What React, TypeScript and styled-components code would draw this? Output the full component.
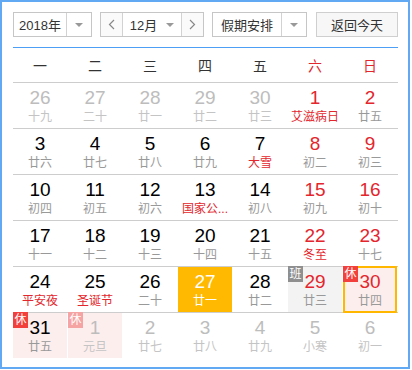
import styled, { createGlobalStyle, css } from "styled-components";

const GlobalStyle = createGlobalStyle`
body {
  margin: 0;
  background: #fff;
  font-family: "Liberation Sans", "Noto Sans CJK SC", sans-serif;
}
`

const CJK = `"Liberation Sans", "Noto Sans CJK SC", sans-serif`

const Frame = styled.div`
width: 410px;
height: 369px;
box-sizing: border-box;
border: 2px solid #62a9f4;
padding: 10px 10px 0 11px;
background: #fff;
`
const Toolbar = styled.div`
display: flex;
align-items: stretch;
height: 25px;
width: 385px;
font-family: ${CJK};
font-size: 13px;
color: #333;
`
const Box = styled.div<{ $w: number; $ml?: number }>`
display: flex;
width: ${p => p.$w}px;
margin-left: ${p => p.$ml || 0}px;
box-sizing: border-box;
border: 1px solid #c6c6c6;
background: #fff;
`
const Label = styled.div`
flex: 1;
display: flex;
align-items: center;
justify-content: center;
gap: 9px;
`
const Caret = styled.span`
width: 0;
height: 0;
border-left: 4px solid transparent;
border-right: 4px solid transparent;
border-top: 4px solid #999;
`
const ArrowPart = styled.div`
width: 24px;
display: flex;
align-items: center;
justify-content: center;
border-left: 1px solid #d2d2d2;
`
const NavBtn = styled.div<{ $side: "l" | "r" }>`
width: 21px;
display: flex;
align-items: center;
justify-content: center;
background: #fafafa;
${p => p.$side === "l" ? css`border-right: 1px solid #d2d2d2;` : css`border-left: 1px solid #d2d2d2;`}
`
const TodayBtn = styled.div`
flex: 1;
margin-left: 9px;
display: flex;
align-items: center;
justify-content: center;
box-sizing: border-box;
border: 1px solid #cfcfcf;
background: #f7f7f7;
`
const BlueLine = styled.div`
margin-top: 10px;
width: 385px;
height: 1px;
background: #4d9ff5;
`
const WeekRow = styled.div`
display: grid;
grid-template-columns: repeat(7, 54px);
column-gap: 1px;
height: 34px;
border-bottom: 1px solid #cdcdcd;
font-family: ${CJK};
font-size: 14px;
`
const WeekDay = styled.div<{ $red?: boolean }>`
display: flex;
align-items: center;
justify-content: center;
color: ${p => p.$red ? "#e3262d" : "#333"};
`
const WeekLine = styled.div<{ $last?: boolean }>`
display: grid;
grid-template-columns: repeat(7, 54px);
column-gap: 1px;
height: 45px;
border-bottom: ${p => p.$last ? "none" : "1px solid #cdcdcd"};
`
const Cell = styled.div<{ $bg?: string; $selected?: boolean }>`
position: relative;
display: flex;
flex-direction: column;
align-items: center;
padding-top: 4px;
box-sizing: border-box;
background: ${p => p.$bg || "transparent"};
${p => p.$selected && css`
  &::after {
    content: "";
    position: absolute;
    inset: -1px 0 -1px 0;
    border: 2px solid #ffb700;
  }
`}
`
const Num = styled.div<{ $color: string }>`
font-family: "Liberation Sans", sans-serif;
font-size: 19px;
line-height: 22px;
color: ${p => p.$color};
`
const Lunar = styled.div<{ $color: string }>`
font-family: ${CJK};
font-size: 12px;
line-height: 17px;
white-space: nowrap;
color: ${p => p.$color};
`
const Badge = styled.span<{ $kind: "rest" | "work" | "restFaded" }>`
position: absolute;
left: 0;
top: -1px;
width: 15px;
height: 16px;
line-height: 16px;
text-align: center;
font-family: ${CJK};
font-size: 12px;
color: #fff;
z-index: 1;
background: ${p => p.$kind === "work" ? "#8f8f8f" : p.$kind === "rest" ? "#f2403c" : "#f5a3a3"};
`

interface Day {
  n: number
  lunar: string
  other?: boolean
  red?: boolean
  lunarRed?: boolean
  today?: boolean
  badge?: "rest" | "work" | "restFaded"
  bg?: string
  selected?: boolean
}

const PINK = "#fdeeee"

const weeks: Day[][] = [
  [
    { n: 26, lunar: "十九", other: true },
    { n: 27, lunar: "二十", other: true },
    { n: 28, lunar: "廿一", other: true },
    { n: 29, lunar: "廿二", other: true },
    { n: 30, lunar: "廿三", other: true },
    { n: 1, lunar: "艾滋病日", red: true, lunarRed: true },
    { n: 2, lunar: "廿五", red: true },
  ],
  [
    { n: 3, lunar: "廿六" },
    { n: 4, lunar: "廿七" },
    { n: 5, lunar: "廿八" },
    { n: 6, lunar: "廿九" },
    { n: 7, lunar: "大雪", lunarRed: true },
    { n: 8, lunar: "初二", red: true },
    { n: 9, lunar: "初三", red: true },
  ],
  [
    { n: 10, lunar: "初四" },
    { n: 11, lunar: "初五" },
    { n: 12, lunar: "初六" },
    { n: 13, lunar: "国家公...", lunarRed: true },
    { n: 14, lunar: "初八" },
    { n: 15, lunar: "初九", red: true },
    { n: 16, lunar: "初十", red: true },
  ],
  [
    { n: 17, lunar: "十一" },
    { n: 18, lunar: "十二" },
    { n: 19, lunar: "十三" },
    { n: 20, lunar: "十四" },
    { n: 21, lunar: "十五" },
    { n: 22, lunar: "冬至", red: true, lunarRed: true },
    { n: 23, lunar: "十七", red: true },
  ],
  [
    { n: 24, lunar: "平安夜", lunarRed: true },
    { n: 25, lunar: "圣诞节", lunarRed: true },
    { n: 26, lunar: "二十" },
    { n: 27, lunar: "廿一", today: true },
    { n: 28, lunar: "廿二" },
    { n: 29, lunar: "廿三", red: true, badge: "work", bg: "#f3f3f3" },
    { n: 30, lunar: "廿四", red: true, badge: "rest", bg: PINK, selected: true },
  ],
  [
    { n: 31, lunar: "廿五", badge: "rest", bg: PINK },
    { n: 1, lunar: "元旦", other: true, badge: "restFaded", bg: PINK },
    { n: 2, lunar: "廿七", other: true },
    { n: 3, lunar: "廿八", other: true },
    { n: 4, lunar: "廿九", other: true },
    { n: 5, lunar: "小寒", other: true },
    { n: 6, lunar: "初一", other: true },
  ],
]

const numColor = (d: Day) => {
  if (d.today) return "#fff"
  if (d.other) return "#bdbdbd"
  if (d.red) return "#e3262d"
  return "#000"
}
const lunarColor = (d: Day) => {
  if (d.today) return "#fff"
  if (d.other) return "#c4c4c4"
  if (d.lunarRed) return "#e3262d"
  return "#999"
}

const Chevron = ({ dir }: { dir: "l" | "r" }) => (
  <svg width="7" height="11" viewBox="0 0 7 11">
    <path d={dir === "l" ? "M6 1 L1.5 5.5 L6 10" : "M1 1 L5.5 5.5 L1 10"} fill="none" stroke="#888" strokeWidth="1.2" />
  </svg>
)

const weekNames = ["一", "二", "三", "四", "五", "六", "日"]

export default function App() {
  return <>
    <GlobalStyle />
    <Frame>
      <Toolbar>
        <Box $w={79}>
          <Label>2018年</Label>
          <ArrowPart><Caret /></ArrowPart>
        </Box>
        <Box $w={104} $ml={8}>
          <NavBtn $side="l"><Chevron dir="l" /></NavBtn>
          <Label>12月<Caret /></Label>
          <NavBtn $side="r"><Chevron dir="r" /></NavBtn>
        </Box>
        <Box $w={95} $ml={8}>
          <Label>假期安排</Label>
          <ArrowPart><Caret /></ArrowPart>
        </Box>
        <TodayBtn>返回今天</TodayBtn>
      </Toolbar>
      <BlueLine />
      <WeekRow>
        {weekNames.map((w, i) => <WeekDay key={w} $red={i > 4}>{w}</WeekDay>)}
      </WeekRow>
      {weeks.map((week, wi) => (
        <WeekLine key={wi} $last={wi === weeks.length - 1}>
          {week.map((d, di) => (
            <Cell key={di} $bg={d.today ? "#ffb900" : d.bg} $selected={d.selected}>
              {d.badge && <Badge $kind={d.badge}>{d.badge === "work" ? "班" : "休"}</Badge>}
              <Num $color={numColor(d)}>{d.n}</Num>
              <Lunar $color={lunarColor(d)}>{d.lunar}</Lunar>
            </Cell>
          ))}
        </WeekLine>
      ))}
    </Frame>
  </>
}
